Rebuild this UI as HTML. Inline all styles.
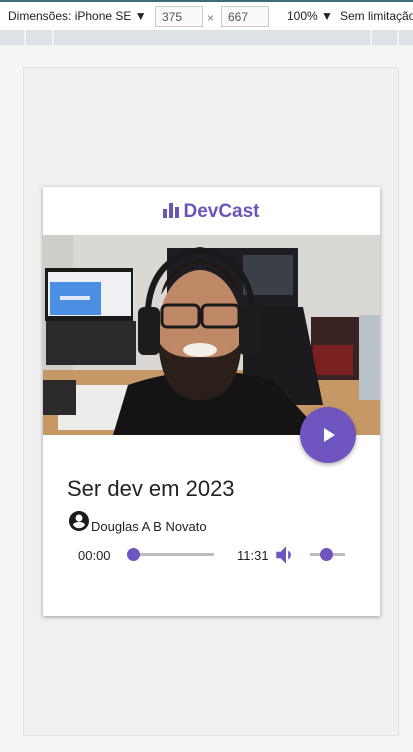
<!DOCTYPE html>
<html><head><meta charset="utf-8"><style>
*{margin:0;padding:0;box-sizing:border-box}
body{width:413px;height:752px;background:#f5f5f5;position:relative;overflow:hidden;font-family:"Liberation Sans",sans-serif}
.top{position:absolute;left:0;top:0;width:413px;height:30px;background:#fff;border-top:2px solid #3b6e78;font-size:12px;color:#222;overflow:hidden}
.top span{position:absolute;top:7px;white-space:nowrap}
.box{position:absolute;top:4px;height:21px;border:1px solid #ccc;background:#fafafa;font-size:12px;color:#555;padding:3px 0 0 6px}
.ruler{position:absolute;left:0;top:30px;width:413px;height:15px;background:#dee1e6}
.ruler i{position:absolute;top:0;width:2px;height:15px;background:#f1f3f4}
.frame{position:absolute;left:23px;top:67px;width:376px;height:669px;background:#f0f0f0;border:1px solid #e2e2e2}
.card{position:absolute;left:43px;top:187px;width:337px;height:429px;background:#fff;box-shadow:0 1px 4px rgba(0,0,0,.35)}
.logo{position:absolute;top:14px;left:0;width:337px;text-align:center;color:#6a55b8;font-weight:bold;font-size:19px}
.play{position:absolute;left:257px;top:220px;width:56px;height:56px;border-radius:50%;background:#6e55bf;box-shadow:0 2px 5px rgba(0,0,0,.3)}
.title{position:absolute;left:24px;top:289px;font-size:22px;color:#222}
.auth{position:absolute;left:48px;top:332px;font-size:13px;color:#222}
.t{position:absolute;font-size:13px;color:#222}
</style></head><body>
<div class="top"><span style="left:8px">Dimensões: iPhone SE ▼</span>
<div class="box" style="left:155px;width:48px">375</div><span style="left:207px;top:9px;color:#777">×</span>
<div class="box" style="left:221px;width:48px">667</div>
<span style="left:287px">100% ▼</span><span style="left:340px">Sem limitação</span></div>
<div class="ruler"><i style="left:24px"></i><i style="left:52px"></i><i style="left:370px"></i><i style="left:397px"></i></div>
<div class="frame"></div>
<div class="card">
<div class="logo"><svg width="16" height="15" viewBox="0 0 16 15" style="vertical-align:-1px;margin-right:4px"><rect x="0" y="6" width="4" height="9" fill="#6a55b8"/><rect x="6" y="0" width="4" height="15" fill="#6a55b8"/><rect x="12" y="4" width="4" height="11" fill="#6a55b8"/></svg>DevCast</div>
<svg style="position:absolute;left:0;top:48px" width="337" height="200" viewBox="0 0 337 200">
<rect width="337" height="200" fill="#d9d8d5"/>
<rect x="0" y="0" width="30" height="200" fill="#cfcdca"/>
<rect x="124" y="13" width="131" height="67" fill="#1e1e22"/>
<rect x="200" y="20" width="50" height="40" fill="#3a3f48"/>
<rect x="2" y="33" width="88" height="53" fill="#1a1a1a"/>
<rect x="5" y="37" width="83" height="44" fill="#eef0f4"/>
<rect x="7" y="47" width="51" height="33" fill="#4b8fe2"/>
<rect x="17" y="61" width="30" height="4" fill="#dde8f8"/>
<rect x="3" y="86" width="90" height="44" fill="#2a2a2c"/>
<rect x="0" y="135" width="337" height="65" fill="#c69866"/>
<rect x="268" y="82" width="50" height="63" fill="#3a2222"/>
<rect x="270" y="110" width="40" height="30" fill="#7a2020"/>
<rect x="316" y="80" width="21" height="85" fill="#b9c2c8"/>
<rect x="15" y="150" width="80" height="45" fill="#ececea"/>
<rect x="0" y="145" width="33" height="35" fill="#2a2a2a"/>
<path d="M200 72 L260 72 L280 170 L200 170 Z" fill="#1b1b1d"/>
<path d="M70 200 L85 150 Q157 125 230 145 L280 200 Z" fill="#141414"/>
<ellipse cx="157" cy="97" rx="42" ry="62" fill="#bf8866"/>
<path d="M115 105 Q118 165 157 165 Q196 165 199 105 Q190 125 157 122 Q124 125 115 105Z" fill="#2a1f19"/>
<path d="M118 60 Q157 -5 197 60 Q190 30 157 25 Q124 30 118 60Z" fill="#201713"/>
<ellipse cx="157" cy="115" rx="17" ry="7" fill="#f2efe8"/>
<rect x="119" y="70" width="37" height="22" rx="5" fill="none" stroke="#1a1a1a" stroke-width="3"/>
<rect x="159" y="70" width="37" height="22" rx="5" fill="none" stroke="#1a1a1a" stroke-width="3"/>
<path d="M105 95 Q100 25 157 15 Q214 25 210 95" fill="none" stroke="#1a1a1a" stroke-width="6"/>
<rect x="95" y="72" width="22" height="48" rx="6" fill="#1c1c1c"/>
<rect x="196" y="72" width="22" height="48" rx="6" fill="#1c1c1c"/>
</svg>
<div class="play"><svg width="56" height="56"><path d="M24 21 L35 28 L24 35Z" fill="#fff"/></svg></div>
<div class="title">Ser dev em 2023</div>
<svg style="position:absolute;left:24px;top:322px" width="24" height="24" viewBox="0 0 24 24"><path fill="#1b1b1b" d="M12 2C6.48 2 2 6.48 2 12s4.48 10 10 10 10-4.48 10-10S17.52 2 12 2zm0 3.5a3.5 3.5 0 110 7 3.5 3.5 0 010-7zM12 19.2c-2.5 0-4.7-1.3-6-3.2.03-2 4-3.1 6-3.1s5.97 1.1 6 3.1c-1.3 1.9-3.5 3.2-6 3.2z"/></svg>
<div class="auth">Douglas A B Novato</div>
<div class="t" style="left:35px;top:361px">00:00</div>
<div style="position:absolute;left:90px;top:366px;width:81px;height:3px;background:#bdbdbd"></div>
<div style="position:absolute;left:84px;top:361px;width:13px;height:13px;border-radius:50%;background:#6e55bf"></div>
<div class="t" style="left:194px;top:361px">11:31</div>
<svg style="position:absolute;left:230px;top:355px" width="26" height="26" viewBox="0 0 24 24"><path fill="#6e55bf" d="M3 9v6h4l5 5V4L7 9H3zm13.5 3A4.5 4.5 0 0014 8v8a4.47 4.47 0 002.5-4z"/></svg>
<div style="position:absolute;left:267px;top:366px;width:35px;height:3px;background:#bdbdbd"></div>
<div style="position:absolute;left:277px;top:361px;width:13px;height:13px;border-radius:50%;background:#6e55bf"></div>
</div>
</body></html>
